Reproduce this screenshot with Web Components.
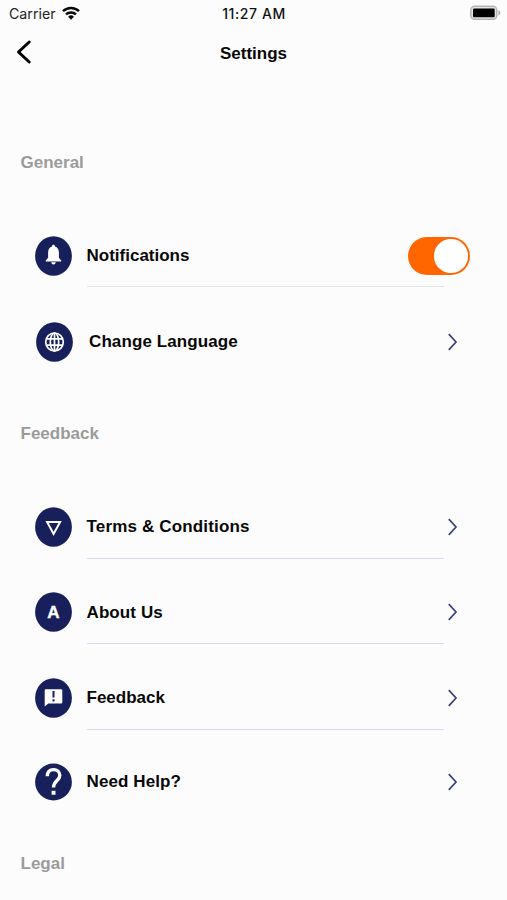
<!DOCTYPE html>
<html lang="en">
<head>
<meta charset="UTF-8">
<title>Settings</title>
<style>
  body {
    margin: 0;
    height: 900px;
    overflow: hidden;
    background: #fcfcfc;
    color: #080808;
    font-family: "Liberation Sans", Arial, sans-serif;
  }
</style>
</head>
<body>
<settings-screen></settings-screen>

<script>
const icons = {
  bell: `<path fill="#fff" d="M18.500 8.800c1 0 1.400.6 1.400 1.600 2.800.8 4 3 4 6v5.300l2.300 2.700v1H10.800v-1l2.300-2.700v-5.300c0-3 1.200-5.200 4-6 0-1 .4-1.600 1.400-1.600zM16.300 26.300h4.400c-.2 1.400-1 2.200-2.200 2.200s-2-.8-2.200-2.200z"/>`,
  globe: `<g fill="none" stroke="#fff" stroke-width="1.700"><ellipse cx="18.500" cy="20" rx="8.800" ry="9"/><ellipse cx="18.500" cy="20" rx="4.200" ry="9"/><path d="M18.500 11v18M10.500 16.900h16M10.500 23.100h16"/></g>`,
  triangle: `<path fill="none" stroke="#fff" stroke-width="2" d="M12.100 15h13l-6.500 12z"/>`,
  letter: `<text x="18.500" y="26" text-anchor="middle" fill="#fff" stroke="#fff" stroke-width=".4" font-size="17" font-weight="700">A</text>`,
  message: `<path fill="#fff" d="M10.900 11.200h15.200a1.200 1.200 0 0 1 1.200 1.200v11.800a1.200 1.200 0 0 1-1.200 1.200H13.300l-3.600 3.200V12.400a1.200 1.200 0 0 1 1.200-1.200z"/><path fill="#18205c" d="M17.500 12.900h2v6.500h-2zM17.500 21.300h2v2.200h-2z"/>`,
  help: `<path fill="none" stroke="#fff" stroke-width="3.400" d="M12.300 14.300c0-4.500 2.500-6.700 6.200-6.700s6.300 2.500 6.300 6c0 5-6.300 5.200-6.300 12"/><path fill="#fff" d="M16.600 28.800h3.900v3.900h-3.900z"/>`
};

class StatusBar extends HTMLElement {
  constructor() {
    super();
    this.attachShadow({ mode: "open" });
  }

  connectedCallback() {
    this.shadowRoot.innerHTML = `
      <style>
        :host {
          display: grid;
          grid-template-columns: 1fr auto 1fr;
          align-items: center;
          height: 28px;
          padding: 0 6px 0 9px;
          font: 14.200px Inter, sans-serif;
          color: #222;
        }
        .carrier { display: flex; align-items: center; gap: 6px; }
        .time { font-weight: 500; font-size: 14px; letter-spacing: 0.600px; color: #111; margin: -1px 0 0 -2px; }
        .battery { justify-self: end; margin-top: -2px; }
        svg { display: block; }
      </style>
      <div class="carrier">
        <span style="margin-top:-1px">Carrier</span>
        <svg width="18" height="14" viewBox="0 0 18 14" style="margin-top:-3px">
          <g fill="none" stroke="#080808" stroke-width="2.500">
            <path d="M1 5.200a11.500 11.500 0 0 1 16 0"/>
            <path d="M4 8.400a7.200 7.200 0 0 1 10 0"/>
          </g>
          <path fill="#080808" d="M9 13.800l-2.900-3a4.100 4.100 0 0 1 5.800 0z"/>
        </svg>
      </div>
      <span class="time">11:27 AM</span>
      <svg class="battery" width="31" height="16" viewBox="0 0 31 16">
        <rect x=".8" y="1.300" width="26" height="13" rx="3.800" fill="#e4e4e4" stroke="#b5b5b5" stroke-width="1.500"/>
        <rect x="3" y="3.500" width="21.700" height="8.700" rx="1" fill="#000"/>
        <path d="M28.400 5.200c2.500 1 2.500 4.200 0 5.200z" fill="#aaa"/>
      </svg>
    `;
  }
}
customElements.define("status-bar", StatusBar);

class NavHeader extends HTMLElement {
  constructor() {
    super();
    this.attachShadow({ mode: "open" });
  }

  connectedCallback() {
    this.shadowRoot.innerHTML = `
      <style>
        :host {
          display: grid;
          grid-template-columns: 1fr auto 1fr;
          align-items: center;
          height: 52px;
          padding: 0 16px;
        }
        svg { display: block; margin-top: -4px; }
        h1 { margin: 0; font-size: 17px; line-height: 20px; }
      </style>
      <svg width="16" height="26" viewBox="0 0 16 26">
        <path d="M13.200 3L2.500 13l10.700 10" fill="none" stroke="#000" stroke-width="3" stroke-linecap="round" stroke-linejoin="round"/>
      </svg>
      <h1><slot></slot></h1>
    `;
  }
}
customElements.define("nav-header", NavHeader);

class SettingsGroup extends HTMLElement {
  constructor() {
    super();
    this.attachShadow({ mode: "open" });
  }

  connectedCallback() {
    this.shadowRoot.innerHTML = `
      <style>
        :host { display: block; }
        h2 {
          margin: 0 0 29.300px 20.500px;
          font-size: 17px;
          line-height: 20px;
          color: #9b9b9b;
        }
      </style>
      <h2>${this.getAttribute("heading")}</h2>
      <slot></slot>
    `;
  }
}
customElements.define("settings-group", SettingsGroup);

class ToggleSwitch extends HTMLElement {
  constructor() {
    super();
    this.attachShadow({ mode: "open" });
  }

  connectedCallback() {
    this.shadowRoot.innerHTML = `
      <style>
        :host {
          display: flex;
          justify-content: flex-end;
          align-items: center;
          box-sizing: border-box;
          width: 62.500px;
          height: 38px;
          padding: 0 2.500px;
          border-radius: 19px;
          background: #ff6600;
        }
        span { width: 33.500px; height: 33.500px; border-radius: 50%; background: #fff; }
      </style>
      <span></span>
    `;
  }
}
customElements.define("toggle-switch", ToggleSwitch);

class SettingsRow extends HTMLElement {
  constructor() {
    super();
    this.attachShadow({ mode: "open" });
  }

  connectedCallback() {
    const icon = this.getAttribute("icon");
    const ry = icon === "help" ? 18.5 : 19.7;

    this.shadowRoot.innerHTML = `
      <style>
        :host { display: block; padding: var(--row-top, 23.500px) 37px 0 35px; }
        .main {
          display: flex;
          align-items: center;
          height: 61px;
        }
        :host([inset]) .main { padding-left: 1px; }
        :host([inset]) .label { margin-left: 16px; }
        svg { display: block; flex: none; margin-top: var(--icon-shift, 0); }
        .label {
          flex: 1;
          margin-left: 14.500px;
          font-size: 17px;
          font-weight: 700;
          line-height: 20px;
          letter-spacing: var(--label-spacing, 0.1px);
          white-space: nowrap;
        }
        .chevron { margin-right: 12px; }
        .line { height: 1px; margin: 0 26px 0 52px; background: var(--line, #d9daf0); }
        :host([last]) .line { background: none; }
      </style>
      <div class="main">
        <svg width="37" height="40" viewBox="0 0 37 40">
          <ellipse cx="18.500" cy="20" rx="18.400" ry="${ry}" fill="#18205c"/>
          ${icons[icon]}
        </svg>
        <span class="label">${this.getAttribute("label")}</span>
        <slot>
          <svg class="chevron" width="11" height="20" viewBox="0 0 11 20">
            <path d="M1.800 2.200L9 10l-7.200 7.800" fill="none" stroke="#39407a" stroke-width="1.700"/>
          </svg>
        </slot>
      </div>
      <div class="line"></div>
    `;
  }
}
customElements.define("settings-row", SettingsRow);

class SettingsScreen extends HTMLElement {
  constructor() {
    super();
    this.attachShadow({ mode: "open" });
  }

  connectedCallback() {
    this.shadowRoot.innerHTML = `
      <style>
        :host { display: flex; flex-direction: column; }
        .groups { display: flex; flex-direction: column; gap: 50.700px; padding-top: 72.600px; }
        .groups settings-group:nth-child(2) { --icon-shift: -1px; }
        .groups settings-group:last-child { margin-top: -10.700px; }
      </style>
      <status-bar></status-bar>
      <nav-header>Settings</nav-header>
      <div class="groups">
        <settings-group heading="General">
          <settings-row icon="bell" label="Notifications" style="--label-spacing:0;--line:#e4e5ec"><toggle-switch></toggle-switch></settings-row>
          <settings-row icon="globe" label="Change Language" style="--row-top:24px;--icon-shift:-0.500px" inset last></settings-row>
        </settings-group>
        <settings-group heading="Feedback">
          <settings-row icon="triangle" label="Terms &amp;amp; Conditions" style="--label-spacing:0.160px"></settings-row>
          <settings-row icon="letter" label="About Us"></settings-row>
          <settings-row icon="message" label="Feedback" style="--label-spacing:0"></settings-row>
          <settings-row icon="help" label="Need Help?" style="--row-top:22px;--icon-shift:0px" last></settings-row>
        </settings-group>
        <settings-group heading="Legal"></settings-group>
      </div>
    `;
  }
}
customElements.define("settings-screen", SettingsScreen);
</script>
</body>
</html>
